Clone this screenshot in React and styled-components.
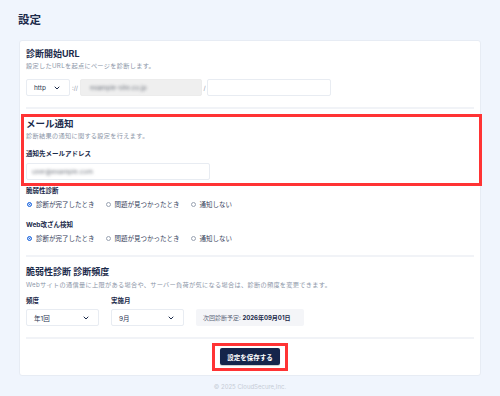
import React from "react"
import styled, { createGlobalStyle } from "styled-components"
import { ChevronDown } from "lucide-react"

const GlobalStyle = createGlobalStyle`
  html, body {
    margin: 0;
    padding: 0;
    background: #f0f5fd;
  }
  body {
    font-family: "Inter", "Noto Sans CJK JP", sans-serif;
    color: #1b2a4a;
  }
`

const Page = styled.div`
  width: 500px;
  height: 396px;
  padding: 12px 19px 0;
  box-sizing: border-box;
`

const Title = styled.h1`
  margin: 0 0 12px -1px;
  font-size: 11.5px;
  line-height: 16px;
  font-weight: 700;
`

const Card = styled.div`
  background: #fff;
  border: 1px solid #e7ecf4;
  border-radius: 3px;
  padding: 7px 6px 10px;
`

const Heading = styled.h2`
  margin: ${(p) => p.$top || 0}px 0 0;
  font-size: ${(p) => (p.$large ? "9.5px" : "9px")};
  line-height: 12px;
  font-weight: 700;
`

const Desc = styled.p`
  margin: ${(p) => p.$top || 1}px 0 0;
  font-size: 6.2px;
  letter-spacing: 0.3px;
  line-height: 10px;
  color: #8b95a7;
  white-space: nowrap;
`

const Label = styled.div`
  margin-top: ${(p) => p.$top || 0}px;
  font-size: 6.5px;
  line-height: 10px;
  font-weight: 700;
`

const Row = styled.div`
  display: flex;
  align-items: ${(p) => p.$align || "center"};
  gap: ${(p) => p.$gap || 0}px;
  margin-top: ${(p) => p.$top || 0}px;
`

const Select = styled.div`
  width: ${(p) => p.$w}px;
  height: 17px;
  box-sizing: border-box;
  border: 1px solid #e8ecf2;
  border-radius: 2px;
  display: flex;
  align-items: center;
  justify-content: space-between;
  padding: 0 ${(p) => p.$pr || 8}px 0 ${(p) => p.$pl || 7}px;
  font-size: 6.5px;
  color: #2a3550;
  background: #fff;
`

const Sep = styled.span`
  font-size: 6px;
  color: #8b95a7;
  width: ${(p) => p.$w}px;
  text-align: center;
`

const Input = styled.div`
  width: ${(p) => p.$w}px;
  height: 17px;
  box-sizing: border-box;
  border: 1px solid ${(p) => (p.$disabled ? "#ececec" : "#e8ecf2")};
  background: ${(p) => (p.$disabled ? "#efefef" : "#fff")};
  border-radius: 2px;
  display: flex;
  align-items: center;
  padding-left: ${(p) => p.$pl || 6}px;
`

const Blurred = styled.span`
  font-size: 6.5px;
  color: #6f747e;
  filter: blur(1.4px);
  white-space: nowrap;
`

const Divider = styled.hr`
  border: 0;
  height: 2px;
  background: #f1f3f7;
  margin: ${(p) => p.$top}px 0 0;
`

const Highlighted = styled.section`
  position: relative;
  margin-top: 9px;
`

const Highlight = styled.div`
  position: absolute;
  top: ${(p) => p.$t}px;
  left: ${(p) => p.$l}px;
  right: ${(p) => p.$r}px;
  bottom: ${(p) => p.$b}px;
  border: 3px solid #ff3334;
  pointer-events: none;
`

const RadioGroup = styled.div`
  display: flex;
  align-items: center;
  gap: 11px;
  margin-top: 2px;
  height: 12px;
  padding-left: 1px;
`

const RadioItem = styled.label`
  display: flex;
  align-items: center;
  gap: 4px;
  font-size: 6.5px;
  color: #34405a;
`

const Dot = styled.span`
  width: 5px;
  height: 5px;
  border-radius: 50%;
  box-sizing: border-box;
  border: ${(p) => (p.$on ? "1px solid #2a6fe0" : "1px solid #9aa3b2")};
  background: ${(p) => (p.$on ? "#2a6fe0" : "#fff")};
  box-shadow: ${(p) => (p.$on ? "inset 0 0 0 0.8px #fff" : "none")};
`

const Field = styled.div`
  display: flex;
  flex-direction: column;
  gap: 3px;
`

const NextDate = styled.div`
  height: 17px;
  box-sizing: border-box;
  background: #f4f5f8;
  border-radius: 2px;
  padding: 0 7px;
  display: flex;
  align-items: center;
  font-size: 6px;
  color: #5c6678;
  width: 108px;
  white-space: nowrap;

  b {
    color: #1b2a4a;
    font-weight: 700;
  }
`

const Actions = styled.div`
  display: flex;
  justify-content: center;
  margin-top: 9px;
`

const ButtonWrap = styled.div`
  position: relative;
  display: flex;
`

const SaveButton = styled.button`
  width: 60px;
  height: 17px;
  border: 0;
  border-radius: 2px;
  background: #15254b;
  color: #fff;
  font-family: inherit;
  font-size: 6.5px;
  font-weight: 700;
  padding: 0;
  box-shadow: 0 1px 1px rgba(0, 0, 0, 0.2);
`

const Footer = styled.div`
  text-align: center;
  font-size: 6px;
  line-height: 10px;
  color: #c6ccd6;
  margin-top: 6px;
`

const Radios = ({ selected = 0 }) => (
  <RadioGroup>
    {["診断が完了したとき", "問題が見つかったとき", "通知しない"].map((t, i) => (
      <RadioItem key={t}>
        <Dot $on={i === selected} />
        {t}
      </RadioItem>
    ))}
  </RadioGroup>
)

const Chevron = () => <ChevronDown size={8} strokeWidth={3} color="#1b2a4a" />

export default function App() {
  return (
    <Page>
      <GlobalStyle />
      <Title>設定</Title>
      <Card>
        <Heading>診断開始URL</Heading>
        <Desc>設定したURLを起点にページを診断します。</Desc>
        <Row $top={8}>
          <Select $w={44}>
            http
            <Chevron />
          </Select>
          <Sep $w={10}>://</Sep>
          <Input $w={122} $disabled $pl={9}>
            <Blurred>example-site.co.jp</Blurred>
          </Input>
          <Sep $w={5}>/</Sep>
          <Input $w={124} />
        </Row>
        <Divider $top={11} />

        <Highlighted>
          <Highlight $t={-4} $l={-5} $r={-8} $b={-6} />
          <Heading $large>メール通知</Heading>
          <Desc>診断結果の通知に関する設定を行えます。</Desc>
          <Label $top={8}>通知先メールアドレス</Label>
          <Row $top={4}>
            <Input $w={184} $pl={5}>
              <Blurred>user@example.com</Blurred>
            </Input>
          </Row>
        </Highlighted>

        <Label $top={6}>脆弱性診断</Label>
        <Radios />
        <Label $top={10}>Web改ざん検知</Label>
        <Radios />
        <Divider $top={11} />

        <Heading $top={9}>脆弱性診断 診断頻度</Heading>
        <Desc $top={2}>
          Webサイトの通信量に上限がある場合や、サーバー負荷が気になる場合は、診断の頻度を変更できます。
        </Desc>
        <Row $top={6} $gap={12} $align="flex-end">
          <Field>
            <Label>頻度</Label>
            <Select $w={73}>
              年1回
              <Chevron />
            </Select>
          </Field>
          <Field>
            <Label>実施月</Label>
            <Select $w={73}>
              9月
              <Chevron />
            </Select>
          </Field>
          <NextDate>
            次回診断予定:&nbsp;<b>2026年09月01日</b>
          </NextDate>
        </Row>
        <Divider $top={11} />
        <Actions>
          <ButtonWrap>
            <Highlight $t={-5} $l={-8} $r={-8} $b={-6} />
            <SaveButton>設定を保存する</SaveButton>
          </ButtonWrap>
        </Actions>
      </Card>
      <Footer>© 2025 CloudSecure,Inc.</Footer>
    </Page>
  )
}
